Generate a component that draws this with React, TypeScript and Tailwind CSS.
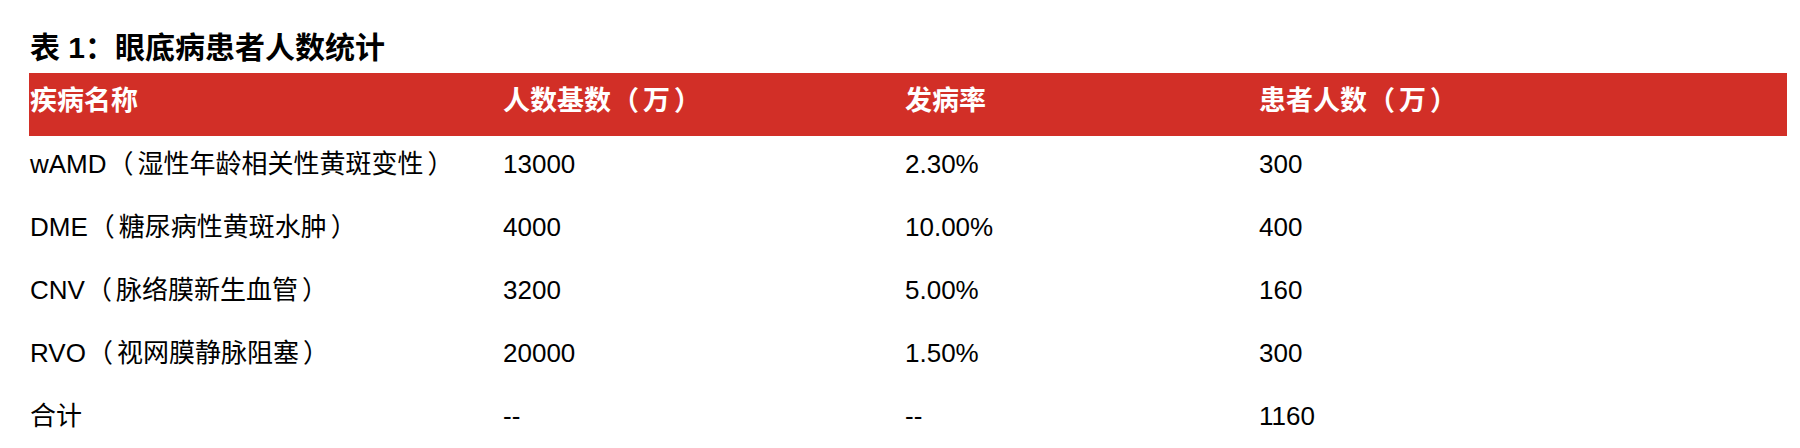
const columns = ["w-[473px]", "w-[402px]", "w-[354px]", "flex-1"];

const header = ["疾病名称", "人数基数（万）", "发病率", "患者人数（万）"];

const rows = [
  ["wAMD（湿性年龄相关性黄斑变性）", "13000", "2.30%", "300"],
  ["DME（糖尿病性黄斑水肿）", "4000", "10.00%", "400"],
  ["CNV（脉络膜新生血管）", "3200", "5.00%", "160"],
  ["RVO（视网膜静脉阻塞）", "20000", "1.50%", "300"],
  ["合计", "--", "--", "1160"],
];

// 全角括号两侧略留空，贴近原图排版
function Cell({ text }: { text: string }) {
  const parts = text.split(/([（）])/).filter(Boolean);
  return (
    <>
      {parts.map((p, i) => {
        if (p === "（")
          return (
            <span key={i} className="ml-[1px] mr-[4px]">
              {p}
            </span>
          );
        if (p === "）")
          return (
            <span key={i} className="ml-[4px]">
              {p}
            </span>
          );
        return <span key={i}>{p}</span>;
      })}
    </>
  );
}

export default function App() {
  return (
    <div className="h-[448px] w-[1800px] overflow-hidden bg-white font-['Liberation_Sans','Noto_Sans_CJK_SC',sans-serif] text-black">
      <div className="ml-[29px] w-[1758px]">
        {/* 标题 */}
        <div className="pl-[1px] pt-[30px] mb-[7px] text-[30px] font-bold leading-[36px]">表 1：眼底病患者人数统计</div>

        {/* 表头 — 红色条 */}
        <div className="flex h-[63px] bg-[#d22f27] pt-[12px] text-[27px] font-bold leading-[32px] text-white">
          {header.map((h, i) => (
            <div key={h} className={`${columns[i]} pl-[1px] whitespace-nowrap`}>
              <Cell text={h} />
            </div>
          ))}
        </div>

        {rows.map((r) => (
          <div key={r[0]} className="flex h-[63px] pt-[12px] text-[26px] leading-[32px]">
            {r.map((c, i) => (
              <div key={i} className={`${columns[i]} pl-[1px] whitespace-nowrap`}>
                <Cell text={c} />
              </div>
            ))}
          </div>
        ))}
      </div>
    </div>
  );
}
